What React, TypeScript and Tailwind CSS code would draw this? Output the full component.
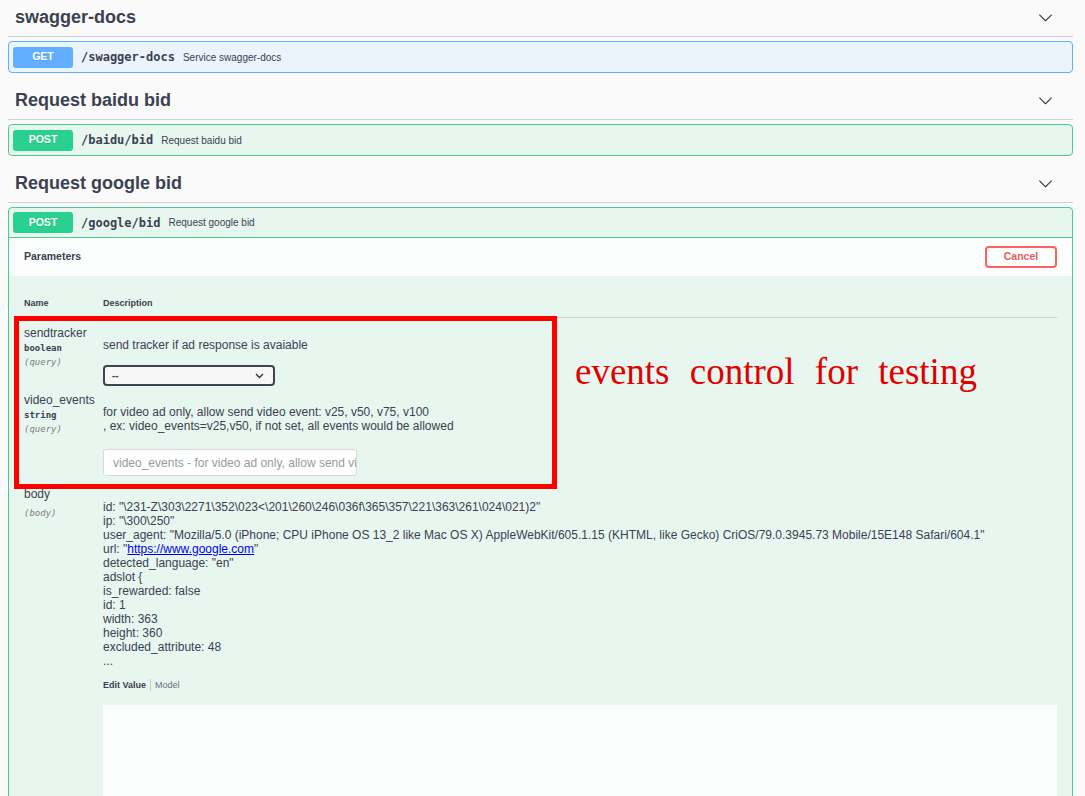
import type { ReactNode } from 'react';

const MONO = "font-['DejaVu_Sans_Mono',monospace]";

function Chevron() {
  return (
    <svg width="15" height="15" viewBox="0 0 20 20" className="shrink-0">
      <path
        fill="#333"
        d="M17.418 6.109c.272-.268.709-.268.979 0s.271.701 0 .969l-7.908 7.83c-.27.268-.707.268-.979 0l-7.908-7.83c-.27-.268-.27-.701 0-.969.271-.268.709-.268.979 0L10 13.25l7.418-7.141z"
      />
    </svg>
  );
}

function TagHeader({ title, first = false }: { title: string; first?: boolean }) {
  return (
    <div
      className={`flex items-center border-b pb-[8px] pl-[7px] pr-[20px] ${
        first ? 'border-[#c9cae0] pt-[6px]' : 'border-[#cfd0d4] pt-[16px]'
      }`}
    >
      <h3 className="flex-1 text-[18px] font-bold leading-[22px]">{title}</h3>
      <Chevron />
    </div>
  );
}

function Summary({
  method,
  path,
  summary,
  color,
}: {
  method: string;
  path: string;
  summary: string;
  color: string;
}) {
  return (
    <>
      <span
        className={`flex h-[21px] w-[60px] shrink-0 items-center justify-center rounded-[3px] text-[10.5px] font-bold text-white [text-shadow:0_1px_0_rgba(0,0,0,0.1)] ${color}`}
      >
        {method}
      </span>
      <span className={`${MONO} text-[12px] font-bold`}>{path}</span>
      <span className="text-[10px]">{summary}</span>
    </>
  );
}

function ParamName({ name, type, inn, body = false }: { name: string; type?: string; inn: string; body?: boolean }) {
  return (
    <div className="w-[79px] shrink-0">
      <div className="text-[12px] leading-[14px]">{name}</div>
      {type && <div className={`${MONO} mt-[1px] text-[9px] font-bold leading-[14px]`}>{type}</div>}
      <div className={`${MONO} ${body ? 'mt-[5px]' : ''} text-[9px] italic leading-[14px] text-[#808080]`}>
        ({inn})
      </div>
    </div>
  );
}

function Line({ children }: { children: ReactNode }) {
  return <div className="leading-[14px]">{children}</div>;
}

export default function App() {
  return (
    <div className="relative min-h-screen w-[1085px] overflow-hidden bg-[#fafafa] pl-[8px] pr-[12px] font-['Liberation_Sans',Arial,sans-serif] text-[#3b4151]">
      <TagHeader title="swagger-docs" first />
      <div className="mt-[4px] flex h-[32px] items-center gap-[8px] rounded-[4px] border border-[#61affe] bg-[#ebf3fb] px-[4px]">
        <Summary method="GET" path="/swagger-docs" summary="Service swagger-docs" color="bg-[#61affe]" />
      </div>

      <TagHeader title="Request baidu bid" />
      <div className="mt-[4px] flex h-[32px] items-center gap-[8px] rounded-[4px] border border-[#49cc90] bg-[#e8f6f0] px-[4px]">
        <Summary method="POST" path="/baidu/bid" summary="Request baidu bid" color="bg-[#2ad08f]" />
      </div>

      <TagHeader title="Request google bid" />
      <div className="mt-[4px] rounded-t-[4px] border border-[#49cc90] bg-[#e8f6f0]">
        <div className="flex h-[30px] items-center gap-[8px] border-b border-[#49cc90] px-[4px]">
          <Summary method="POST" path="/google/bid" summary="Request google bid" color="bg-[#2ad08f]" />
        </div>

        {/* Parameters header */}
        <div className="flex h-[38px] items-center justify-between bg-white/85 pl-[15px] pr-[15px]">
          <span className="text-[10.5px] font-bold">Parameters</span>
          <button className="h-[22px] w-[72px] rounded-[4px] border-2 border-[#ff6060] text-[10.5px] font-bold text-[#e65c5c]">
            Cancel
          </button>
        </div>

        <div className="px-[15px]">
          <div className="flex border-b border-[#c9d3cf] pb-[8px] pt-[21px] text-[9px] font-bold leading-[12px]">
            <span className="w-[79px]">Name</span>
            <span>Description</span>
          </div>

          {/* sendtracker */}
          <div className="flex">
            <div className="pt-[8px]">
              <ParamName name="sendtracker" type="boolean" inn="query" />
            </div>
            <div className="pt-[20px] text-[12px] leading-[14px]">
              <div>send tracker if ad response is avaiable</div>
              <div className="mt-[13px] flex h-[21px] w-[172px] items-center justify-between rounded-[4px] border-2 border-[#41444e] bg-[#f7f7f7] pl-[7px] pr-[9px]">
                <span className="text-[10px] font-bold">--</span>
                <svg width="9" height="6" viewBox="0 0 9 6">
                  <path d="M1 1l3.5 3.5L8 1" fill="none" stroke="#333" strokeWidth="1.4" />
                </svg>
              </div>
            </div>
          </div>

          {/* video_events */}
          <div className="flex pb-[4px]">
            <div className="pt-[7px]">
              <ParamName name="video_events" type="string" inn="query" />
            </div>
            <div className="pt-[19px] text-[12px] leading-[14px]">
              <div>for video ad only, allow send video event: v25, v50, v75, v100</div>
              <div>, ex: video_events=v25,v50, if not set, all events would be allowed</div>
              <input
                readOnly
                placeholder="video_events - for video ad only, allow send video event"
                className="mt-[16px] block h-[27px] w-[254px] rounded-[3px] border border-[#d9d9d9] bg-white pl-[9px] text-[12px] outline-none placeholder:text-[#9a9a9a]"
              />
            </div>
          </div>

          {/* body */}
          <div className="flex">
            <div className="pt-[7px]">
              <ParamName name="body" inn="body" body />
            </div>
            <div className="flex-1 pt-[20px] text-[12px]">
              <Line>{String.raw`id: "\231-Z\303\2271\352\023<\201\260\246\036f\365\357\221\363\261\024\021)2"`}</Line>
              <Line>{String.raw`ip: "\300\250"`}</Line>
              <Line>
                user_agent: "Mozilla/5.0 (iPhone; CPU iPhone OS 13_2 like Mac OS X) AppleWebKit/605.1.15 (KHTML,
                like Gecko) CriOS/79.0.3945.73 Mobile/15E148 Safari/604.1"
              </Line>
              <Line>
                url: "<a className="text-[#0000ee] underline">https://www.google.com</a>"
              </Line>
              <Line>detected_language: "en"</Line>
              <Line>adslot {'{'}</Line>
              <Line>is_rewarded: false</Line>
              <Line>id: 1</Line>
              <Line>width: 363</Line>
              <Line>height: 360</Line>
              <Line>excluded_attribute: 48</Line>
              <Line>...</Line>

              <div className="mt-[11px] flex items-center text-[9px] leading-[12px]">
                <span className="font-bold">Edit Value</span>
                <span className="mx-[4px] h-[12px] w-px bg-[#c8cccb]" />
                <span className="text-[#6b707c]">Model</span>
              </div>

              <div className="mt-[14px] h-[220px] w-full bg-[#fbfdfc]" />
            </div>
          </div>
        </div>
      </div>

      {/* annotation overlay */}
      <div className="pointer-events-none absolute left-[14px] top-[316px] h-[173px] w-[543px] border-[5px] border-[#ff0000]" />
      <div className="pointer-events-none absolute left-[575px] top-[352px] whitespace-nowrap font-['Liberation_Serif','Times_New_Roman',serif] text-[37px] leading-[40px] text-[#e00000] [word-spacing:11px]">
        events control for testing
      </div>
    </div>
  );
}
